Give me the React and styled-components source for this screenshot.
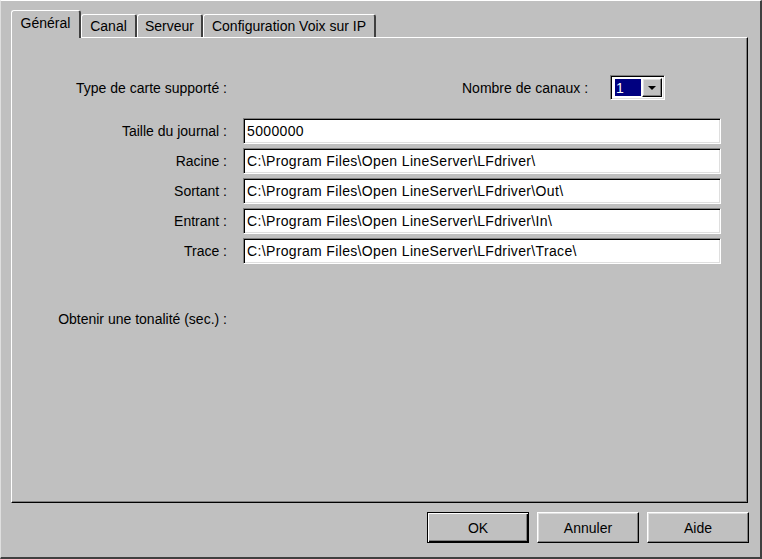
import React from 'react';
import styled, { createGlobalStyle, css } from 'styled-components';

const GlobalStyle = createGlobalStyle`
  html, body {
    margin: 0;
    padding: 0;
    background: #c0c0c0;
  }
  body {
    font-family: "Liberation Sans", Arial, sans-serif;
    font-size: 14px;
    color: #000;
  }
`;

const raised = css`
  border-top: 1px solid #fff;
  border-left: 1px solid #fff;
  border-right: 1px solid #000;
  border-bottom: 1px solid #000;
  box-shadow: inset -1px -1px #808080, inset 1px 1px #dfdfdf;
`;

const sunken = css`
  border-top: 1px solid #808080;
  border-left: 1px solid #808080;
  border-right: 1px solid #fff;
  border-bottom: 1px solid #fff;
  box-shadow: inset 1px 1px #000, inset -1px -1px #dfdfdf;
`;

const Window = styled.div`
  box-sizing: border-box;
  width: 762px;
  height: 559px;
  border-top: 1px solid #fff;
  border-left: 1px solid #dfdfdf;
  border-right: 2px solid #404040;
  border-bottom: 2px solid #404040;
  padding: 9px 12px 0 10px;
  display: flex;
  flex-direction: column;
`;

const TabStrip = styled.div`
  display: flex;
  align-items: flex-end;
  height: 27px;
`;

const Tab = styled.div`
  box-sizing: border-box;
  width: ${p => p.$width}px;
  height: ${p => (p.$active ? 28 : 23)}px;
  margin-bottom: ${p => (p.$active ? -1 : 0)}px;
  position: relative;
  z-index: ${p => (p.$active ? 2 : 1)};
  background: #c0c0c0;
  border-top: 1px solid #fff;
  border-left: 1px solid #fff;
  border-right: 2px solid #404040;
  border-radius: 3px 3px 0 0;
  display: flex;
  align-items: center;
  justify-content: center;
  padding-bottom: ${p => (p.$active ? 3 : 0)}px;
  white-space: nowrap;
`;

const Panel = styled.div`
  box-sizing: border-box;
  width: 737px;
  height: 466px;
  border-top: 1px solid #fff;
  border-left: 1px solid #fff;
  border-right: 1px solid #000;
  border-bottom: 1px solid #000;
  box-shadow: inset -1px -1px #808080;
  padding-top: 37px;
`;

const Form = styled.div`
  display: grid;
  grid-template-columns: 215px 478px;
  column-gap: 16px;
  row-gap: 4px;
  align-items: center;
`;

const Label = styled.div`
  text-align: right;
  white-space: nowrap;
  ${p => p.$gapBelow && css`margin-bottom: 14px;`}
  ${p => p.$gapAbove && css`margin-top: 43px;`}
`;

const TopRight = styled.div`
  display: flex;
  align-items: center;
  gap: 22px;
  padding-left: 219px;
  margin-bottom: 14px;
`;

const TextBox = styled.div`
  box-sizing: border-box;
  height: 26px;
  background: #fff;
  ${sunken}
  display: flex;
  align-items: center;
  padding: 0 3px;
  letter-spacing: 0.35px;
  white-space: nowrap;
  overflow: hidden;
`;

const Combo = styled.div`
  box-sizing: border-box;
  width: 55px;
  height: 25px;
  background: #fff;
  ${sunken}
  display: flex;
  align-items: stretch;
  padding: 3px 3px 3px 4px;
  gap: 1px;
`;

const ComboValue = styled.div`
  flex: 1;
  background: #000080;
  color: #fff;
  display: flex;
  align-items: center;
  padding-left: 1px;
`;

const DropButton = styled.div`
  box-sizing: border-box;
  width: 20px;
  margin: -1px -1px -1px 0;
  background: #c0c0c0;
  ${raised}
  display: flex;
  align-items: center;
  justify-content: center;
`;

const Arrow = styled.span`
  width: 0;
  height: 0;
  border-left: 4px solid transparent;
  border-right: 4px solid transparent;
  border-top: 4px solid #000;
`;

const Footer = styled.div`
  display: flex;
  justify-content: flex-end;
  gap: 8px;
  margin: 9px -1px 0 0;
`;

const Button = styled.div`
  box-sizing: border-box;
  width: 102px;
  height: 31px;
  background: #c0c0c0;
  ${raised}
  display: flex;
  align-items: center;
  justify-content: center;
  ${p =>
    p.$default &&
    css`
      border: 1px solid #000;
      box-shadow: inset 1px 1px #fff, inset -1px -1px #000, inset -2px -2px #808080;
    `}
`;

const tabs = [
  { name: 'Général', width: 70, active: true },
  { name: 'Canal', width: 56 },
  { name: 'Serveur', width: 66 },
  { name: 'Configuration Voix sur IP', width: 173 },
];

const paths = [
  { label: 'Taille du journal :', value: '5000000' },
  { label: 'Racine :', value: 'C:\\Program Files\\Open LineServer\\LFdriver\\' },
  { label: 'Sortant :', value: 'C:\\Program Files\\Open LineServer\\LFdriver\\Out\\' },
  { label: 'Entrant :', value: 'C:\\Program Files\\Open LineServer\\LFdriver\\In\\' },
  { label: 'Trace :', value: 'C:\\Program Files\\Open LineServer\\LFdriver\\Trace\\' },
];

export default function App() {
  return (
    <>
      <GlobalStyle />
      <Window>
        <TabStrip>
          {tabs.map(t => (
            <Tab key={t.name} $width={t.width} $active={t.active}>
              {t.name}
            </Tab>
          ))}
        </TabStrip>
        <Panel>
          <Form>
            <Label $gapBelow>Type de carte supporté :</Label>
            <TopRight>
              <span>Nombre de canaux :</span>
              <Combo>
                <ComboValue>1</ComboValue>
                <DropButton>
                  <Arrow />
                </DropButton>
              </Combo>
            </TopRight>
            {paths.map(p => (
              <React.Fragment key={p.label}>
                <Label>{p.label}</Label>
                <TextBox>{p.value}</TextBox>
              </React.Fragment>
            ))}
            <Label $gapAbove>Obtenir une tonalité (sec.) :</Label>
            <div />
          </Form>
        </Panel>
        <Footer>
          <Button $default>OK</Button>
          <Button>Annuler</Button>
          <Button>Aide</Button>
        </Footer>
      </Window>
    </>
  );
}
